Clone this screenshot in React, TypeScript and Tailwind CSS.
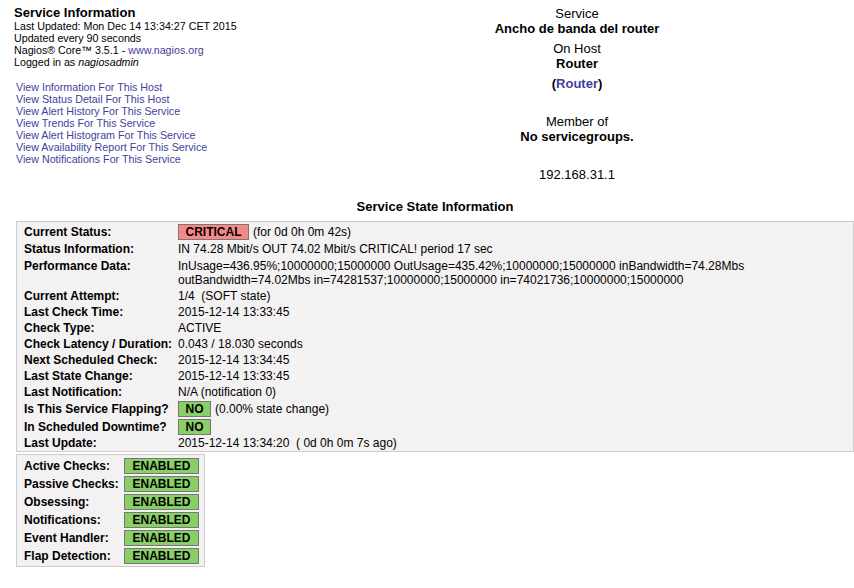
const link = "text-[#3f3f9c]";

function Badge({ text, color, w }: { text: string; color: "red" | "green"; w: string }) {
  return (
    <span
      className={`inline-flex h-[16px] items-center justify-center border border-[#777] text-[12px] font-bold leading-none ${w} ${
        color === "red" ? "bg-[#f88888]" : "bg-[#88d066]"
      }`}
    >
      {text}
    </span>
  );
}

function Row({ label, h, children }: { label: string; h: string; children: React.ReactNode }) {
  return (
    <div className={`flex items-center ${h}`}>
      <div className="w-[154px] shrink-0 font-bold">{label}</div>
      <div className="flex items-center gap-[4px]">{children}</div>
    </div>
  );
}

const links = [
  "View Information For This Host",
  "View Status Detail For This Host",
  "View Alert History For This Service",
  "View Trends For This Service",
  "View Alert Histogram For This Service",
  "View Availability Report For This Service",
  "View Notifications For This Service",
];

const toggles = ["Active Checks:", "Passive Checks:", "Obsessing:", "Notifications:", "Event Handler:", "Flap Detection:"];

export default function App() {
  return (
    <div className="min-h-screen w-[854px] bg-white font-['Liberation_Sans',Arial,sans-serif] text-black">
      <div className="flex pt-[5px]">
        <div className="w-[459px] shrink-0 pl-[14px]">
          <div className="text-[13px] font-bold leading-[15px]">Service Information</div>
          <div className="text-[10.7px] leading-[12px]">
            <div>Last Updated: Mon Dec 14 13:34:27 CET 2015</div>
            <div>Updated every 90 seconds</div>
            <div>
              Nagios® Core™ 3.5.1 - <span className={link}>www.nagios.org</span>
            </div>
            <div>
              Logged in as <i>nagiosadmin</i>
            </div>
          </div>
          <div className="mt-[13px] pl-[2px] text-[10.7px] leading-[12px]">
            {links.map((l) => (
              <div key={l} className={link}>
                {l}
              </div>
            ))}
          </div>
        </div>
        <div className="w-[236px] pt-[1px] text-center text-[13px] leading-[15px]">
          <div>Service</div>
          <div className="font-bold">Ancho de banda del router</div>
          <div className="mt-[5px]">On Host</div>
          <div className="font-bold">Router</div>
          <div className="mt-[5px] font-bold">
            (<span className={link}>Router</span>)
          </div>
          <div className="mt-[23px]">Member of</div>
          <div className="font-bold">No servicegroups.</div>
          <div className="mt-[23px]">192.168.31.1</div>
        </div>
      </div>

      <div className="ml-[16px] mt-[17px] text-center text-[13px] font-bold leading-[15px]">Service State Information</div>

      <div className="ml-[16px] mt-[7px] border border-[#cccccc] bg-[#f3f1f1] pl-[7px] pt-[1px] text-[12px] leading-[14px]">
        <Row label="Current Status:" h="h-[18px]">
          <Badge text="CRITICAL" color="red" w="w-[71px]" />
          <span>(for 0d 0h 0m 42s)</span>
        </Row>
        <Row label="Status Information:" h="h-[16px]">
          IN 74.28 Mbit/s OUT 74.02 Mbit/s CRITICAL! period 17 sec
        </Row>
        <div className="flex h-[31px] items-start pt-[2px]">
          <div className="w-[154px] shrink-0 font-bold">Performance Data:</div>
          <div>
            InUsage=436.95%;10000000;15000000 OutUsage=435.42%;10000000;15000000 inBandwidth=74.28Mbs
            <br />
            outBandwidth=74.02Mbs in=74281537;10000000;15000000 in=74021736;10000000;15000000
          </div>
        </div>
        <Row label="Current Attempt:" h="h-[16px]">
          <span className="whitespace-pre">1/4  (SOFT state)</span>
        </Row>
        <Row label="Last Check Time:" h="h-[16px]">
          2015-12-14 13:33:45
        </Row>
        <Row label="Check Type:" h="h-[16px]">
          ACTIVE
        </Row>
        <Row label="Check Latency / Duration:" h="h-[16px]">
          0.043 / 18.030 seconds
        </Row>
        <Row label="Next Scheduled Check:" h="h-[16px]">
          2015-12-14 13:34:45
        </Row>
        <Row label="Last State Change:" h="h-[16px]">
          2015-12-14 13:33:45
        </Row>
        <Row label="Last Notification:" h="h-[16px]">
          N/A (notification 0)
        </Row>
        <Row label="Is This Service Flapping?" h="h-[18px]">
          <Badge text="NO" color="green" w="w-[33px]" />
          <span>(0.00% state change)</span>
        </Row>
        <Row label="In Scheduled Downtime?" h="h-[17px]">
          <Badge text="NO" color="green" w="w-[33px]" />
        </Row>
        <Row label="Last Update:" h="h-[16px]">
          <span className="whitespace-pre">2015-12-14 13:34:20  ( 0d 0h 0m 7s ago)</span>
        </Row>
      </div>

      <div className="ml-[16px] mt-[2px] w-[189px] border border-[#cccccc] bg-[#f3f1f1] pb-[1px] pl-[7px] pt-[2px] text-[12px] leading-[14px]">
        {toggles.map((t) => (
          <div key={t} className="flex h-[18px] items-center">
            <div className="w-[100px] shrink-0 font-bold">{t}</div>
            <Badge text="ENABLED" color="green" w="w-[75px]" />
          </div>
        ))}
      </div>
    </div>
  );
}
